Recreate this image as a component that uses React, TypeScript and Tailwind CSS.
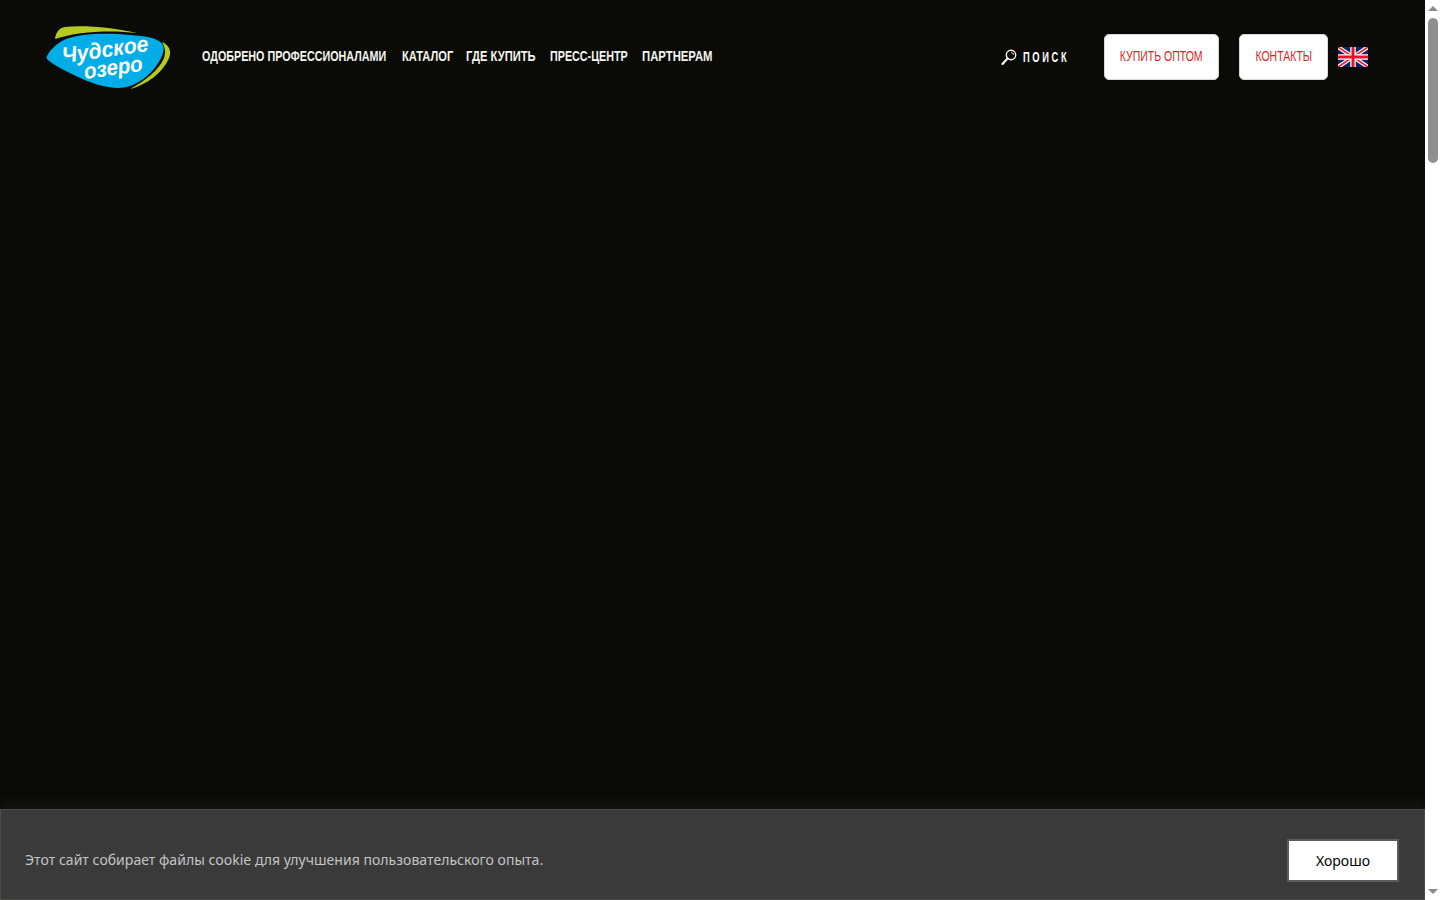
const navItems = [
  { label: "ОДОБРЕНО ПРОФЕССИОНАЛАМИ", width: "w-[186px]", scale: "scale-x-[0.717]" },
  { label: "КАТАЛОГ", width: "w-[50px]", scale: "scale-x-[0.74]" },
  { label: "ГДЕ КУПИТЬ", width: "w-[70px]", scale: "scale-x-[0.745]" },
  { label: "ПРЕСС-ЦЕНТР", width: "w-[78px]", scale: "scale-x-[0.717]" },
  { label: "ПАРТНЕРАМ", width: "w-[71px]", scale: "scale-x-[0.755]" },
];

const sans = "font-['Liberation_Sans',sans-serif]";

function Logo() {
  return (
    <svg width="126" height="66" viewBox="0 0 126 66" className="shrink-0">
      <path d="M9 14 C10 7 13 3 19 2 C40 0 68 3 91 8 C66 5 32 6 9 14Z" fill="#b5cb1f" />
      <path d="M116 17 C123 20 126 26 123 33 C117 48 100 60 84 64 C99 56 113 45 118 33 C120 27 119 22 116 17Z" fill="#b5cb1f" />
      <path d="M1 31 C5 24 10 19 18 15 C34 8 62 8 84 10 C100 11 113 13 117 20 C120 27 112 42 100 52 C91 59 82 63 72 63 C60 63 44 58 30 51 C19 46 8 40 2 35 C1 34 0 33 1 31Z" fill="#00ade6" />
      <text x="17" y="38" fill="#fff" fontFamily="'Liberation Sans', sans-serif" fontStyle="italic" fontWeight="700" fontSize="22" textLength="87" lengthAdjust="spacingAndGlyphs" transform="rotate(-8 17 38)">Чудское</text>
      <text x="39" y="54" fill="#fff" fontFamily="'Liberation Sans', sans-serif" fontStyle="italic" fontWeight="700" fontSize="22" textLength="59" lengthAdjust="spacingAndGlyphs" transform="rotate(-8 39 54)">озеро</text>
    </svg>
  );
}

function UkFlag() {
  return (
    <svg width="30" height="20" viewBox="0 0 30 20" className="shrink-0">
      <rect width="30" height="20" fill="#15205e" />
      <path d="M0 0 L30 20 M30 0 L0 20" stroke="#fff" strokeWidth="4" />
      <path d="M0 0 L30 20 M30 0 L0 20" stroke="#e0243a" strokeWidth="1.8" />
      <path d="M15 0 V20 M0 10 H30" stroke="#fff" strokeWidth="5.5" />
      <path d="M15 0 V20 M0 10 H30" stroke="#e8112d" strokeWidth="3" />
    </svg>
  );
}

function SearchIcon() {
  return (
    <svg width="16" height="16" viewBox="0 0 16 16" fill="none" stroke="#fff" className="shrink-0">
      <circle cx="10" cy="6" r="4.7" strokeWidth="1.4" />
      <path d="M6.5 9.5 L1.5 15" strokeWidth="2" strokeLinecap="round" />
      <path d="M10 3.5 a2.5 2.5 0 0 1 2.5 2.5" strokeWidth="0.8" />
    </svg>
  );
}

function Scrollbar() {
  return (
    <div className="flex w-[15px] shrink-0 flex-col items-center bg-white">
      <div className="mt-[6px] h-0 w-0 border-x-[5px] border-b-[5px] border-x-transparent border-b-[#8a8a8a]" />
      <div className="mt-[7px] h-[145px] w-[10px] rounded-[5px] bg-[#8f8f8f]" />
      <div className="flex-1" />
      <div className="mb-[6px] h-0 w-0 border-x-[5px] border-t-[5px] border-x-transparent border-t-[#8a8a8a]" />
    </div>
  );
}

export default function App() {
  return (
    <div className="flex h-[900px] w-[1440px] overflow-hidden font-['Noto_Sans',sans-serif]">
      <div className="flex min-w-0 flex-1 flex-col bg-[#0a0b06]">
        {/* Header */}
        <header className="flex h-[113px] shrink-0 items-start pl-[46px] pr-[57px]">
          <div className="mt-[25px]">
            <Logo />
          </div>
          <nav className="ml-[30px] mt-[47px] flex gap-[14px]">
            {navItems.map((item) => (
              <a key={item.label} className={`${item.width} block whitespace-nowrap text-[15px] leading-[17px] font-bold text-[#f4f4f0] ${sans}`}>
                <span className={`inline-block origin-left ${item.scale}`}>{item.label}</span>
              </a>
            ))}
          </nav>
          <div className="ml-auto mt-[34px] flex items-center">
            <div className="flex items-center gap-[6px]">
              <SearchIcon />
              <span className={`block w-[46px] whitespace-nowrap text-[14px] font-bold text-white ${sans}`}>
                <span className="inline-block origin-left scale-x-[0.665] tracking-[4px]">ПОИСК</span>
              </span>
            </div>
            <button className={`ml-[35px] flex h-[46px] w-[115px] items-center justify-center rounded-[5px] border border-[#d8d8d8] bg-white pb-[2px] text-[14px] whitespace-nowrap text-[#e01f2a] ${sans}`}>
              <span className="inline-block scale-x-[0.75]">КУПИТЬ ОПТОМ</span>
            </button>
            <button className={`ml-[20px] flex h-[46px] w-[89px] items-center justify-center rounded-[5px] border border-[#d8d8d8] bg-white pb-[2px] text-[14px] whitespace-nowrap text-[#e01f2a] ${sans}`}>
              <span className="inline-block scale-x-[0.75]">КОНТАКТЫ</span>
            </button>
            <div className="ml-[10px]">
              <UkFlag />
            </div>
          </div>
        </header>

        <div className="flex-1" />

        {/* Cookie bar */}
        <div className="flex h-[91px] shrink-0 items-center justify-between border border-[#4a4a48] bg-[#3a3a3a] pt-[11px] pl-[24px] pr-[25px] shadow-[0_-6px_10px_rgba(60,60,50,0.25)]">
          <p className="mb-[2px] text-[14px] tracking-[0.03px] text-[#c4c4c4]">Этот сайт собирает файлы cookie для улучшения пользовательского опыта.</p>
          <button className="h-[43px] w-[112px] border-2 border-[#5c5c5c] bg-white text-[14px] text-black">Хорошо</button>
        </div>
      </div>
      <Scrollbar />
    </div>
  );
}
